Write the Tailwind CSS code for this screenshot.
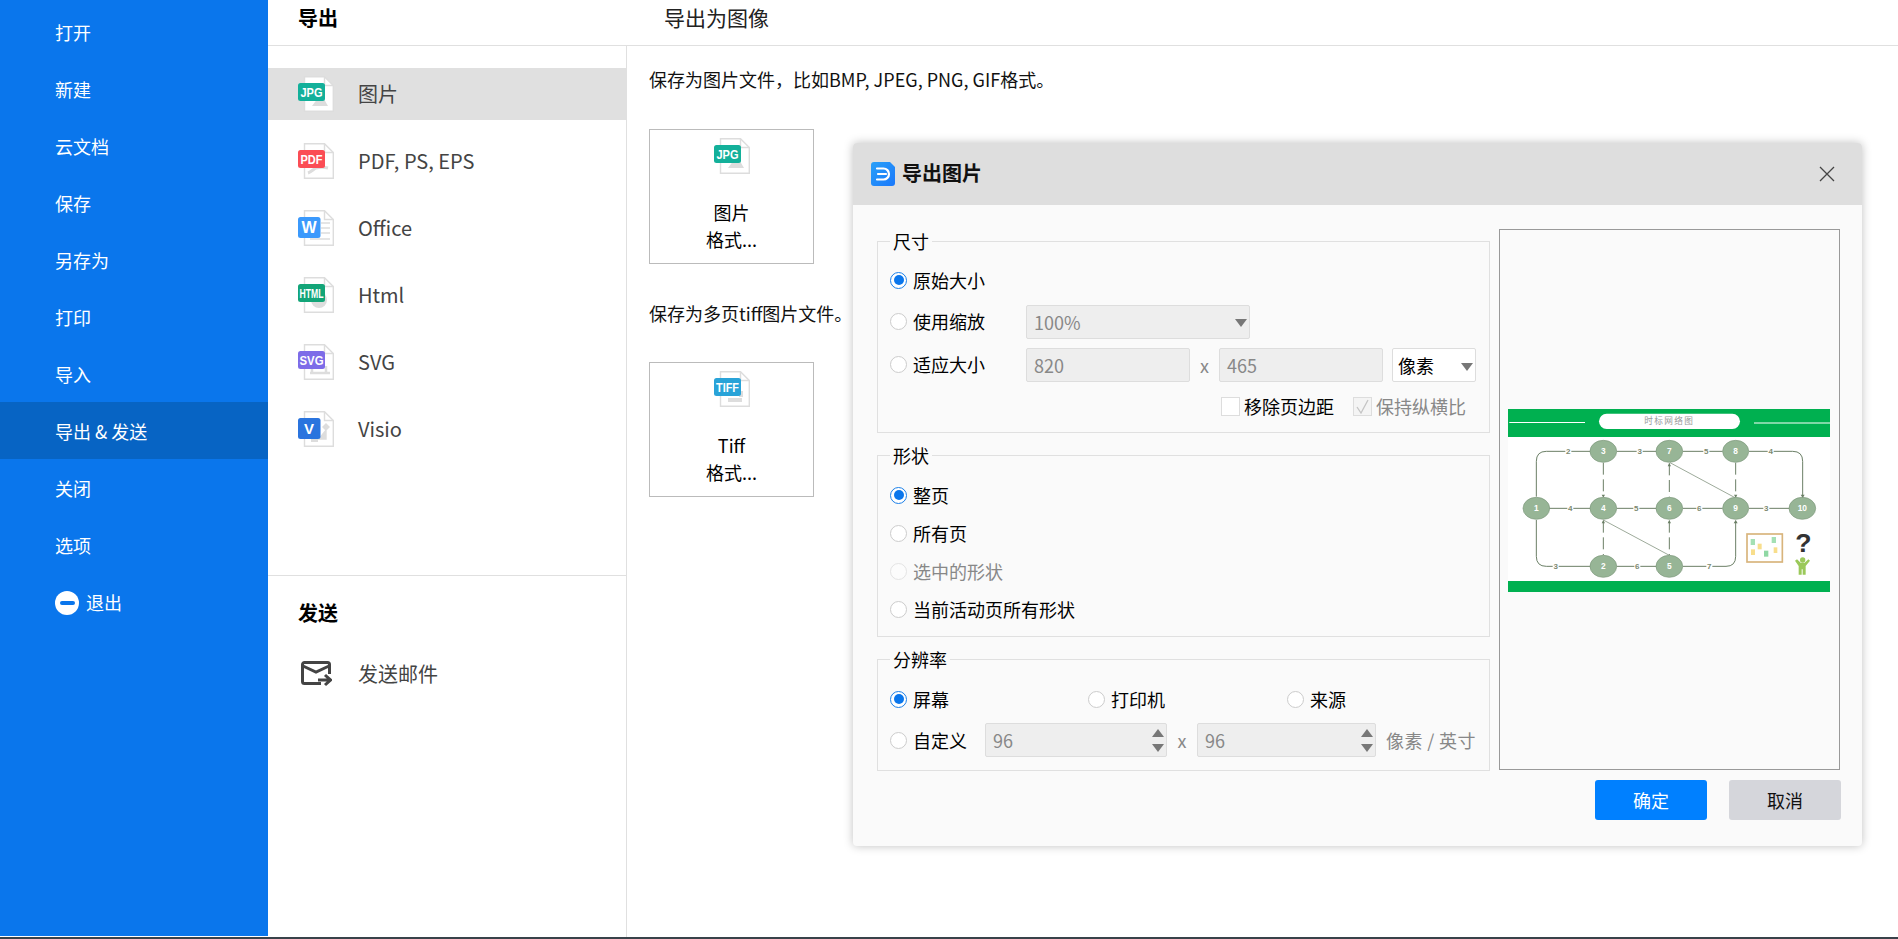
<!DOCTYPE html>
<html lang="zh-CN">
<head>
  <meta charset="UTF-8" />
  <title>导出图片</title>
  <script src="https://cdn.jsdelivr.net/npm/@tailwindcss/browser@4"></script>
</head>
<body class="relative w-[1898px] h-[939px] overflow-hidden bg-white font-['Noto_Sans_CJK_SC','Noto_Sans',sans-serif] text-[18px] text-black">
  <div class="flex h-[937px]">

    <!-- blue menu -->
    <nav class="w-[268px] h-[936px] shrink-0 bg-[#0a76ec] text-white pt-[3px]">
      <div class="h-[57px] flex items-center pl-[55px] pt-[2px]">打开</div>
      <div class="h-[57px] flex items-center pl-[55px] pt-[2px]">新建</div>
      <div class="h-[57px] flex items-center pl-[55px] pt-[2px]">云文档</div>
      <div class="h-[57px] flex items-center pl-[55px] pt-[2px]">保存</div>
      <div class="h-[57px] flex items-center pl-[55px] pt-[2px]">另存为</div>
      <div class="h-[57px] flex items-center pl-[55px] pt-[2px]">打印</div>
      <div class="h-[57px] flex items-center pl-[55px] pt-[2px]">导入</div>
      <div class="h-[57px] flex items-center pl-[55px] pt-[2px] bg-[#0764c4]">导出 &amp; 发送</div>
      <div class="h-[57px] flex items-center pl-[55px] pt-[2px]">关闭</div>
      <div class="h-[57px] flex items-center pl-[55px] pt-[2px]">选项</div>
      <div class="h-[57px] flex items-center pl-[55px] pt-[2px] gap-[7px]">
        <span class="w-[24px] h-[24px] rounded-full bg-white flex items-center justify-center"><span class="w-[15px] h-[4px] rounded-full bg-[#0a76ec]"></span></span>
        退出
      </div>
    </nav>

    <div class="flex-1 flex flex-col">
      <!-- header -->
      <header class="h-[46px] border-b border-[#e0e0e0] flex items-center">
        <div class="w-[396px] pl-[30px] text-[20px] font-bold pb-[9px]">导出</div>
        <div class="text-[21px] text-[#222] pb-[9px]">导出为图像</div>
      </header>

      <div class="flex flex-1">
        <!-- formats list -->
        <aside class="w-[359px] shrink-0 border-r border-[#e0e0e0] flex flex-col text-[20px] text-[#444]">
          <div class="h-[22px]"></div>
          <div class="h-[52px] bg-[#e0e0e0] flex items-center pl-[30px] gap-[24px] pr-0">
            <svg class="w-[36px] h-[36px]" viewBox="0 0 36 36"><path d="M6.5.7h20l8.8 8.8v25.8H6.5z" fill="#fff" stroke="#ddd" stroke-width="1.4"/><path d="M26.5.7v8.8h8.8" fill="none" stroke="#ddd" stroke-width="1.4"/><path d="M14 30l9-12 7 12z" fill="#ddd"/><rect y="7" width="27" height="18" rx="2.5" fill="#13b09a"/><text x="13.5" y="20.500" text-anchor="middle" font-family="Liberation Sans" font-weight="700" font-size="13" textLength="22" lengthAdjust="spacingAndGlyphs" fill="#fff">JPG</text></svg>
            图片
          </div>
          <div class="h-[67px] mt-[7px] flex items-center pl-[30px] gap-[24px]">
            <svg class="w-[36px] h-[36px]" viewBox="0 0 36 36"><path d="M6.5.7h20l8.8 8.8v25.8H6.5z" fill="#fff" stroke="#ddd" stroke-width="1.4"/><path d="M26.5.7v8.8h8.8" fill="none" stroke="#ddd" stroke-width="1.4"/><path d="M10 30c3-1 6-4 8-5 4-1 8-1 12 0" fill="none" stroke="#ddd" stroke-width="3"/><rect y="7" width="27" height="18" rx="2.5" fill="#fb4d55"/><text x="13.5" y="20.500" text-anchor="middle" font-family="Liberation Sans" font-weight="700" font-size="13" textLength="22" lengthAdjust="spacingAndGlyphs" fill="#fff">PDF</text></svg>
            PDF, PS, EPS
          </div>
          <div class="h-[67px] flex items-center pl-[30px] gap-[24px]">
            <svg class="w-[36px] h-[36px]" viewBox="0 0 36 36"><path d="M6.5.7h20l8.8 8.8v25.8H6.5z" fill="#fff" stroke="#ddd" stroke-width="1.4"/><path d="M26.5.7v8.8h8.8" fill="none" stroke="#ddd" stroke-width="1.4"/><path d="M23 13h9M23 18h9M23 23h9M12 29h20" stroke="#ddd" stroke-width="1.4"/><rect y="7" width="22.5" height="21" rx="2.5" fill="#3b99fc"/><text x="11" y="23" text-anchor="middle" font-family="Liberation Sans" font-weight="700" font-size="16" fill="#fff">W</text></svg>
            Office
          </div>
          <div class="h-[67px] flex items-center pl-[30px] gap-[24px]">
            <svg class="w-[36px] h-[36px]" viewBox="0 0 36 36"><path d="M6.5.7h20l8.8 8.8v25.8H6.5z" fill="#fff" stroke="#ddd" stroke-width="1.4"/><path d="M26.5.7v8.8h8.8" fill="none" stroke="#ddd" stroke-width="1.4"/><circle cx="21" cy="23" r="8" fill="#ddd"/><rect y="7" width="27" height="18" rx="2.5" fill="#13a578"/><text x="13.5" y="20.500" text-anchor="middle" font-family="Liberation Sans" font-weight="700" font-size="13" textLength="24" lengthAdjust="spacingAndGlyphs" fill="#fff">HTML</text></svg>
            Html
          </div>
          <div class="h-[67px] flex items-center pl-[30px] gap-[24px]">
            <svg class="w-[36px] h-[36px]" viewBox="0 0 36 36"><path d="M6.5.7h20l8.8 8.8v25.8H6.5z" fill="#fff" stroke="#ddd" stroke-width="1.4"/><path d="M26.5.7v8.8h8.8" fill="none" stroke="#ddd" stroke-width="1.4"/><path d="M12 29h20M14 25v4M28 22v7" stroke="#ddd" stroke-width="2.5"/><rect y="7" width="27" height="18" rx="2.5" fill="#7d6ce8"/><text x="13.5" y="20.500" text-anchor="middle" font-family="Liberation Sans" font-weight="700" font-size="13" textLength="24" lengthAdjust="spacingAndGlyphs" fill="#fff">SVG</text></svg>
            SVG
          </div>
          <div class="h-[67px] flex items-center pl-[30px] gap-[24px]">
            <svg class="w-[36px] h-[36px]" viewBox="0 0 36 36"><path d="M6.5.7h20l8.8 8.8v25.8H6.5z" fill="#fff" stroke="#ddd" stroke-width="1.4"/><path d="M26.5.7v8.8h8.8" fill="none" stroke="#ddd" stroke-width="1.4"/><path d="M28 13l3 3-3 3-3-3zM28 18v10H20" fill="#ddd" stroke="#ddd" stroke-width="1.4"/><rect x="13" y="26" width="7" height="5" fill="#ddd"/><rect y="7" width="22.5" height="21" rx="2.5" fill="#2a74de"/><text x="11" y="23" text-anchor="middle" font-family="Liberation Sans" font-weight="700" font-size="15" fill="#fff">V</text></svg>
            Visio
          </div>

          <div class="mt-[113px] border-t border-[#e0e0e0] pt-[22px] pl-[30px] text-black font-bold leading-[30px] h-[60px]">发送</div>
          <div class="h-[50px] mt-[14px] flex items-center pl-[33px] gap-[26px]">
            <svg class="w-[31px] h-[26px]" viewBox="0 0 31 26" fill="none" stroke="#444" stroke-width="3"><path d="M20 22.500H3.500a2 2 0 0 1-2-2v-17a2 2 0 0 1 2-2h23a2 2 0 0 1 2 2V13"/><path d="M2 5l13 6 13-6"/><path d="M17 19h12M24 14l5.500 5-5.500 5"/></svg>
            发送邮件
          </div>
        </aside>

        <!-- save options -->
        <main class="flex-1 pl-[22px]">
          <p class="h-[27px] mt-[20px] leading-[27px] text-[18px] text-[#111]">保存为图片文件，比如BMP, JPEG, PNG, GIF格式。</p>
          <div class="mt-[36px] w-[165px] h-[135px] border border-[#bbb] flex flex-col items-center pt-[8px] leading-[27px]">
            <svg class="w-[36px] h-[36px] mb-[25px]" viewBox="0 0 36 36"><path d="M6.5.7h20l8.8 8.8v25.8H6.5z" fill="#fff" stroke="#ddd" stroke-width="1.4"/><path d="M26.5.7v8.8h8.8" fill="none" stroke="#ddd" stroke-width="1.4"/><path d="M14 30l9-12 7 12z" fill="#ddd"/><rect y="7" width="27" height="18" rx="2.5" fill="#13b09a"/><text x="13.5" y="20.500" text-anchor="middle" font-family="Liberation Sans" font-weight="700" font-size="13" textLength="22" lengthAdjust="spacingAndGlyphs" fill="#fff">JPG</text></svg>
            <span>图片</span>
            <span>格式...</span>
          </div>
          <p class="h-[27px] mt-[36px] leading-[27px] text-[#111]">保存为多页tiff图片文件。</p>
          <div class="mt-[35px] w-[165px] h-[135px] border border-[#bbb] flex flex-col items-center pt-[8px] leading-[27px]">
            <svg class="w-[36px] h-[36px] mb-[25px]" viewBox="0 0 36 36"><path d="M6.5.7h20l8.8 8.8v25.8H6.5z" fill="#fff" stroke="#ddd" stroke-width="1.4"/><path d="M26.5.7v8.8h8.8" fill="none" stroke="#ddd" stroke-width="1.4"/><path d="M14 29h14M27 20v6" stroke="#ddd" stroke-width="4"/><rect y="7" width="27" height="18" rx="2.5" fill="#29a3d8"/><text x="13.5" y="20.500" text-anchor="middle" font-family="Liberation Sans" font-weight="700" font-size="13" textLength="23" lengthAdjust="spacingAndGlyphs" fill="#fff">TIFF</text></svg>
            <span>Tiff</span>
            <span>格式...</span>
          </div>
        </main>
      </div>
    </div>
  </div>
  <div class="h-[2px] bg-[#39424a]"></div>

  <!-- export dialog -->
  <section class="absolute left-[853px] top-[143px] w-[1009px] h-[703px] bg-[#fafafa] rounded-[4px] shadow-[0_0_10px_rgba(0,0,0,0.25)] overflow-hidden flex flex-col">
    <div class="h-[62px] shrink-0 bg-[#dedede] flex items-center pl-[18px] pr-[27px]">
      <svg class="w-[24px] h-[24px]" viewBox="0 0 24 24" fill="none"><defs><linearGradient id="lg" x1="0" y1="0" x2="1" y2="1"><stop offset="0" stop-color="#29a0f8"/><stop offset="1" stop-color="#1a78fb"/></linearGradient></defs><path d="M3 0h16l5 5v16a3 3 0 0 1-3 3H3a3 3 0 0 1-3-3V3a3 3 0 0 1 3-3z" fill="url(#lg)"/><path d="M6 6.500h6.500a5.500 5.500 0 0 1 0 11H6M7 12h8" stroke="#fff" stroke-width="2.200" stroke-linecap="round"/></svg>
      <span class="ml-[7px] text-[20px] font-bold text-[#111] pb-[2px]">导出图片</span>
      <svg class="ml-auto w-[16px] h-[16px]" viewBox="0 0 16 16" stroke="#444" stroke-width="1.300"><path d="M1 1l14 14M15 1L1 15"/></svg>
    </div>

    <div class="flex flex-1 pl-[24px]">
      <div class="w-[613px] pt-[36px]">
        <!-- size -->
        <div class="relative h-[192px] border border-[#e0e0e0] pl-[12px] pt-[21px]">
          <span class="absolute top-[-14px] left-[12px] px-[3px] bg-[#fafafa] leading-[27px]">尺寸</span>
          <div class="h-[34px] flex items-center">
            <span class="w-[17px] h-[17px] rounded-full border border-[#1a7fe8] bg-white flex items-center justify-center"><span class="w-[10px] h-[10px] rounded-full bg-[#0a76ec]"></span></span>
            <span class="ml-[6px]">原始大小</span>
          </div>
          <div class="h-[34px] mt-[8px] flex items-center">
            <div class="w-[136px] flex items-center pb-[2px]">
              <span class="w-[17px] h-[17px] rounded-full border border-[#ccc] bg-white"></span>
              <span class="ml-[6px]">使用缩放</span>
            </div>
            <div class="relative w-[224px] h-[34px] bg-[#eee] border border-[#ddd] rounded-[2px] pl-[7px] flex items-center text-[#888]">100%
              <span class="absolute right-[2px] top-[13px] w-0 h-0 border-x-[6px] border-x-transparent border-t-[8px] border-t-[#777]"></span>
            </div>
          </div>
          <div class="h-[34px] mt-[9px] flex items-center">
            <div class="w-[136px] flex items-center pb-[2px]">
              <span class="w-[17px] h-[17px] rounded-full border border-[#ccc] bg-white"></span>
              <span class="ml-[6px]">适应大小</span>
            </div>
            <div class="w-[164px] h-[34px] bg-[#eee] border border-[#ddd] rounded-[2px] pl-[7px] flex items-center text-[#888]">820</div>
            <span class="w-[29px] text-center text-[#888]">x</span>
            <div class="w-[164px] h-[34px] bg-[#eee] border border-[#ddd] rounded-[2px] pl-[7px] flex items-center text-[#888]">465</div>
            <div class="relative ml-[9px] w-[84px] h-[34px] bg-white border border-[#ddd] rounded-[2px] pl-[5px] flex items-center">像素
              <span class="absolute right-[2px] top-[14px] w-0 h-0 border-x-[6px] border-x-transparent border-t-[8px] border-t-[#777]"></span>
            </div>
          </div>
          <div class="h-[34px] mt-[7px] flex items-center pl-[331px]">
            <span class="w-[19px] h-[19px] border border-[#ddd] bg-white"></span>
            <span class="ml-[4px] w-[109px]">移除页边距</span>
            <span class="w-[19px] h-[19px] border border-[#ddd] bg-[#f4f4f4] flex items-center justify-center">
              <svg class="w-[15px] h-[15px]" viewBox="0 0 15 15" fill="none" stroke="#c4c4c4" stroke-width="1.300"><path d="M2 8l4 6 7-13"/></svg>
            </span>
            <span class="ml-[4px] text-[#888]">保持纵横比</span>
          </div>
        </div>

        <!-- shape -->
        <div class="relative h-[182px] mt-[22px] border border-[#e0e0e0] pl-[12px] pt-[20px]">
          <span class="absolute top-[-14px] left-[12px] px-[3px] bg-[#fafafa] leading-[27px]">形状</span>
          <div class="h-[38px] flex items-center">
            <span class="w-[17px] h-[17px] rounded-full border border-[#1a7fe8] bg-white flex items-center justify-center"><span class="w-[10px] h-[10px] rounded-full bg-[#0a76ec]"></span></span>
            <span class="ml-[6px]">整页</span>
          </div>
          <div class="h-[38px] flex items-center">
            <span class="w-[17px] h-[17px] rounded-full border border-[#ccc] bg-white"></span>
            <span class="ml-[6px]">所有页</span>
          </div>
          <div class="h-[38px] flex items-center">
            <span class="w-[17px] h-[17px] rounded-full border border-[#e4e4e4] bg-[#fcfcfc]"></span>
            <span class="ml-[6px] text-[#888]">选中的形状</span>
          </div>
          <div class="h-[38px] flex items-center">
            <span class="w-[17px] h-[17px] rounded-full border border-[#ccc] bg-white"></span>
            <span class="ml-[6px]">当前活动页所有形状</span>
          </div>
        </div>

        <!-- resolution -->
        <div class="relative h-[112px] mt-[22px] border border-[#e0e0e0] pl-[12px] pt-[22px]">
          <span class="absolute top-[-14px] left-[12px] px-[3px] bg-[#fafafa] leading-[27px]">分辨率</span>
          <div class="h-[34px] flex items-center">
            <div class="w-[198px] flex items-center">
              <span class="w-[17px] h-[17px] rounded-full border border-[#1a7fe8] bg-white flex items-center justify-center"><span class="w-[10px] h-[10px] rounded-full bg-[#0a76ec]"></span></span>
              <span class="ml-[6px]">屏幕</span>
            </div>
            <div class="w-[199px] flex items-center">
              <span class="w-[17px] h-[17px] rounded-full border border-[#ccc] bg-white"></span>
              <span class="ml-[6px]">打印机</span>
            </div>
            <div class="flex items-center">
              <span class="w-[17px] h-[17px] rounded-full border border-[#ccc] bg-white"></span>
              <span class="ml-[6px]">来源</span>
            </div>
          </div>
          <div class="h-[34px] mt-[7px] flex items-center">
            <div class="w-[95px] flex items-center">
              <span class="w-[17px] h-[17px] rounded-full border border-[#ccc] bg-white"></span>
              <span class="ml-[6px]">自定义</span>
            </div>
            <div class="relative w-[182px] h-[34px] bg-[#eee] border border-[#ddd] rounded-[2px] pl-[7px] flex items-center text-[#888]">96
              <span class="absolute right-[2px] top-[5px] w-0 h-0 border-x-[6px] border-x-transparent border-b-[8px] border-b-[#777]"></span>
              <span class="absolute right-[2px] bottom-[4px] w-0 h-0 border-x-[6px] border-x-transparent border-t-[8px] border-t-[#777]"></span>
            </div>
            <span class="w-[30px] text-center text-[#888]">x</span>
            <div class="relative w-[179px] h-[34px] bg-[#eee] border border-[#ddd] rounded-[2px] pl-[7px] flex items-center text-[#888]">96
              <span class="absolute right-[2px] top-[5px] w-0 h-0 border-x-[6px] border-x-transparent border-b-[8px] border-b-[#777]"></span>
              <span class="absolute right-[2px] bottom-[4px] w-0 h-0 border-x-[6px] border-x-transparent border-t-[8px] border-t-[#777]"></span>
            </div>
            <span class="ml-[10px] text-[#888] whitespace-nowrap tracking-[0.4px]">像素 / 英寸</span>
          </div>
        </div>
      </div>

      <!-- preview and buttons -->
      <div class="ml-[9px] w-[341px] pt-[24px] flex flex-col">
        <div class="w-[341px] h-[541px] border border-[#999] flex items-center justify-center">
          <svg class="w-[322px] h-[183px] mt-[2px] ml-[-2px]" viewBox="54 57 966 549" font-family="Liberation Sans">
            <rect x="54" y="57" width="966" height="549" fill="#fff"/>
            <rect x="54" y="57" width="966" height="84" fill="#00b050"/>
            <rect x="54" y="573" width="966" height="33" fill="#00b050"/>
            <rect x="327" y="71" width="423" height="46" rx="23" fill="#fff"/>
            <path d="M58 97.500h227M792 99h228" stroke="#fff" stroke-width="3"/>
            <text x="538" y="102" text-anchor="middle" font-family="Noto Sans CJK SC" font-size="26" letter-spacing="4" fill="#9a9a9a">时标网络图</text>

            <g fill="none" stroke="#6b7f66" stroke-width="3">
              <path d="M139 320V214q0-30 30-30H300M380 184H498M578 184H698M777 184H908q30 0 30 30V325"/>
              <path d="M139 355H300M380 355H498M578 355H698M777 355H898"/>
              <path d="M139 390V499q0 30 30 30H300M380 529H498M578 529H708q29 0 29-30V392"/>
              <path d="M340 218V318M538 220V322M737 218V322M340 392V495M538 392V495" stroke-dasharray="36 14"/>
              <path d="M540 218L737 324M340 390L538 496" stroke-width="2"/>
            </g>
            <g fill="#6b7f66">
              <path d="M302 178l10 6-10 6zM500 178l10 6-10 6zM700 178l10 6-10 6zM302 349l10 6-10 6zM500 349l10 6-10 6zM700 349l10 6-10 6zM900 349l10 6-10 6zM302 523l10 6-10 6zM500 523l10 6-10 6z"/>
              <path d="M932 314l6 10 6-10zM335 314l5 9 5-9zM732 314l5 9 5-9zM533 229l5-10 5 10zM335 400l5-10 5 10zM533 400l5-10 5 10zM731 400l6-10 6 10z"/>
            </g>
            <g font-size="24" font-weight="700" fill="#7d8a70" text-anchor="middle">
              <rect x="226" y="174" width="18" height="20" fill="#fff"/><text x="235" y="193">2</text>
              <rect x="440" y="174" width="18" height="20" fill="#fff"/><text x="449" y="193">3</text>
              <rect x="640" y="174" width="18" height="20" fill="#fff"/><text x="649" y="193">5</text>
              <rect x="833" y="174" width="18" height="20" fill="#fff"/><text x="842" y="193">4</text>
              <rect x="232" y="345" width="18" height="20" fill="#fff"/><text x="241" y="364">4</text>
              <rect x="430" y="345" width="18" height="20" fill="#fff"/><text x="439" y="364">5</text>
              <rect x="619" y="345" width="18" height="20" fill="#fff"/><text x="628" y="364">6</text>
              <rect x="820" y="345" width="18" height="20" fill="#fff"/><text x="829" y="364">3</text>
              <rect x="188" y="519" width="18" height="20" fill="#fff"/><text x="197" y="538">3</text>
              <rect x="433" y="519" width="18" height="20" fill="#fff"/><text x="442" y="538">6</text>
              <rect x="649" y="519" width="18" height="20" fill="#fff"/><text x="658" y="538">7</text>
            </g>
            <g fill="#97b596" stroke="#7b977a" stroke-width="2">
              <ellipse cx="139" cy="355" rx="40" ry="33"/><ellipse cx="340" cy="184" rx="40" ry="33"/><ellipse cx="538" cy="184" rx="40" ry="33"/><ellipse cx="737" cy="184" rx="39" ry="33"/><ellipse cx="340" cy="355" rx="40" ry="33"/><ellipse cx="538" cy="355" rx="40" ry="33"/><ellipse cx="737" cy="355" rx="39" ry="33"/><ellipse cx="937" cy="355" rx="40" ry="33"/><ellipse cx="340" cy="529" rx="40" ry="33"/><ellipse cx="538" cy="529" rx="40" ry="33"/>
            </g>
            <g font-size="25" font-weight="700" fill="#fff" text-anchor="middle">
              <text x="139" y="364">1</text><text x="340" y="193">3</text><text x="538" y="193">7</text><text x="737" y="193">8</text><text x="340" y="364">4</text><text x="538" y="364">6</text><text x="737" y="364">9</text><text x="937" y="364">10</text><text x="340" y="538">2</text><text x="538" y="538">5</text>
            </g>
            <!-- pin board -->
            <rect x="771" y="432" width="106" height="84" fill="#fff" stroke="#d8b47c" stroke-width="5"/>
            <rect x="782" y="447" width="13" height="18" fill="#a4e0b4"/><rect x="803" y="461" width="12" height="17" fill="#f8de8c"/><rect x="845" y="441" width="13" height="18" fill="#a4e0b4"/><rect x="783" y="478" width="12" height="17" fill="#f8de8c"/><rect x="822" y="482" width="13" height="18" fill="#8fd8a4"/><rect x="851" y="472" width="11" height="17" fill="#f8de8c"/>
            <!-- question figure -->
            <text x="940" y="487" text-anchor="middle" font-size="80" font-weight="700" fill="#333">?</text>
            <path d="M915 512l6-4 11 10h12l11-10 5 4-13 16v26h-9v-16h-3v16h-9v-26z" fill="#9bc95a"/>
            <circle cx="938" cy="510" r="8" fill="#9bc95a"/>
          </svg>
        </div>
        <div class="flex justify-end gap-[22px] mt-[10px] mr-[-1px]">
          <button class="w-[112px] h-[40px] rounded-[3px] bg-[#0080ff] text-white">确定</button>
          <button class="w-[112px] h-[40px] rounded-[3px] bg-[#d5d6db] text-[#111]">取消</button>
        </div>
      </div>
    </div>
  </section>
</body>
</html>
